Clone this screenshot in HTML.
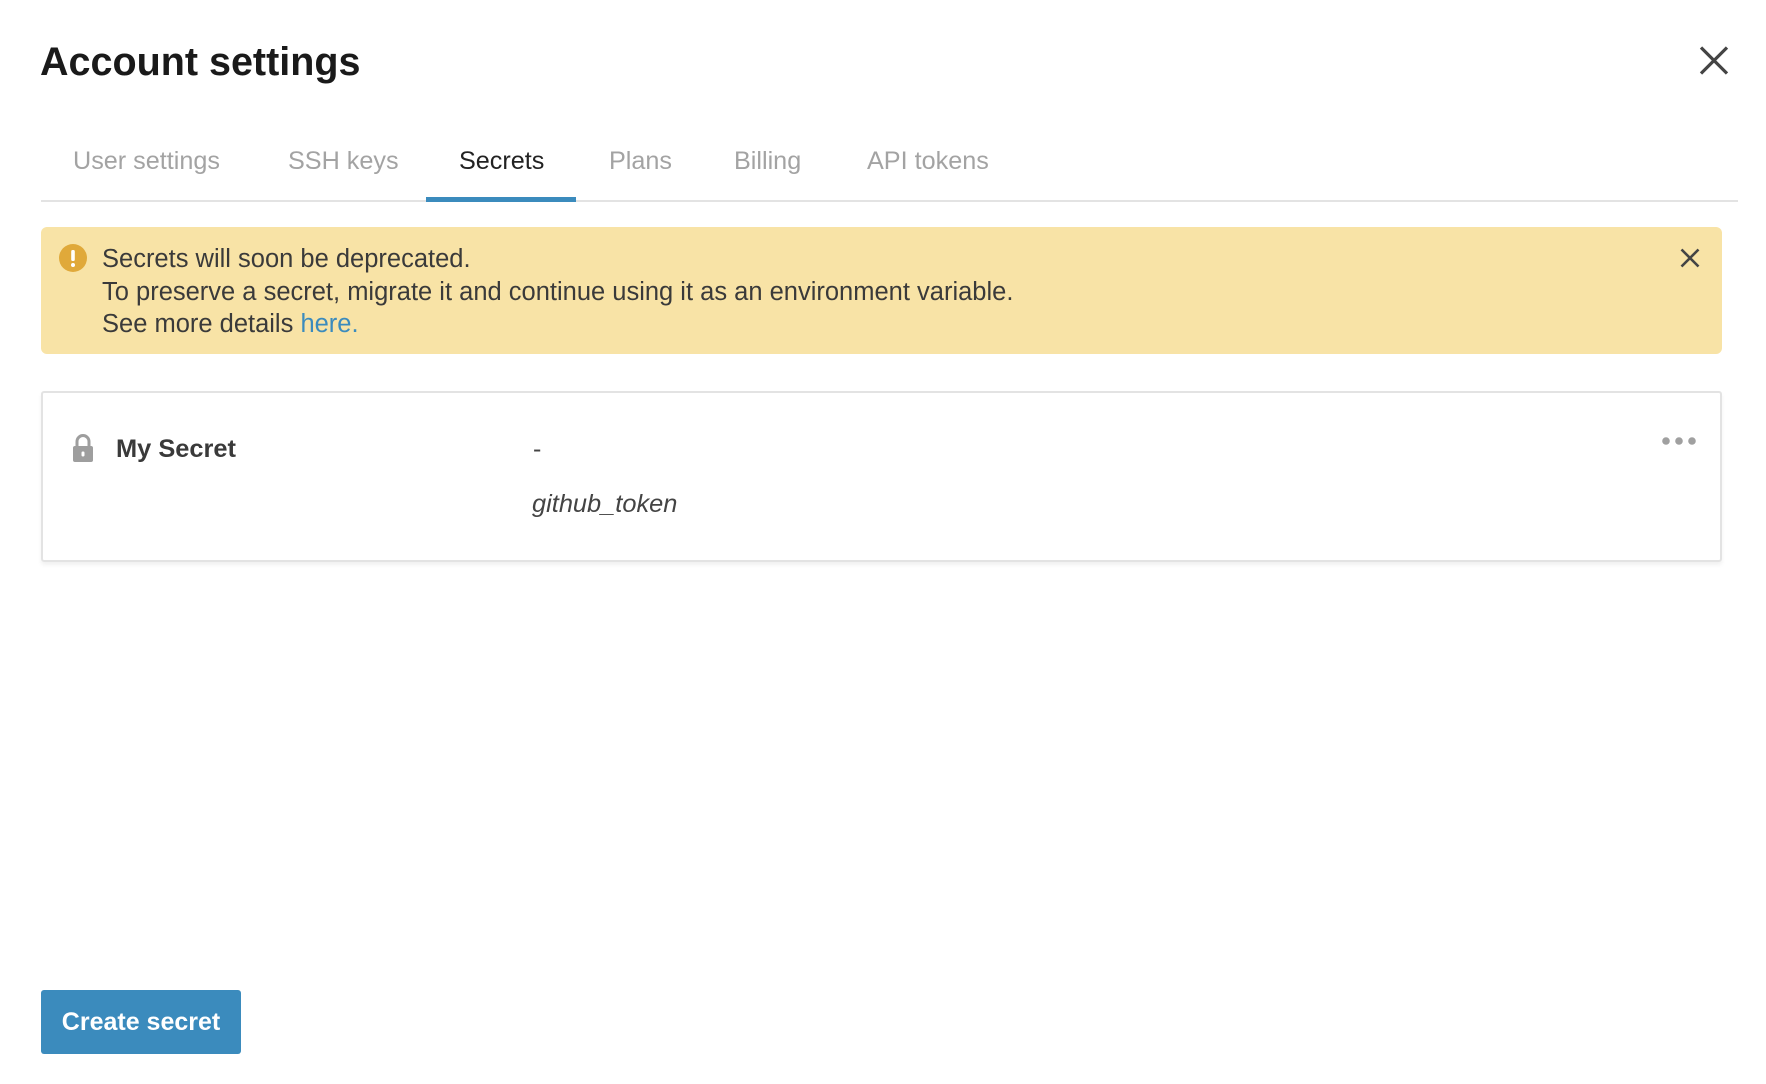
<!DOCTYPE html>
<html><head><meta charset="utf-8"><style>
*{margin:0;padding:0;box-sizing:border-box}
body{width:1766px;height:1084px;background:#fff;font-family:"Liberation Sans",sans-serif;position:relative;overflow:hidden;color:#333}
.a{position:absolute;white-space:nowrap}
.tab{position:absolute;top:147px;font-size:25.2px;color:#a3a3a3;line-height:28px}
</style></head><body>
<div class="a" style="left:40px;top:40px;font-size:39.5px;font-weight:bold;color:#1a1a1a;line-height:44px">Account settings</div>
<svg class="a" style="left:1699px;top:46px" width="30" height="29" viewBox="0 0 30 29"><path d="M2 1.5L28 27.5M28 1.5L2 27.5" stroke="#444" stroke-width="3.2"/></svg>

<div class="tab" style="left:73px">User settings</div>
<div class="tab" style="left:288px">SSH keys</div>
<div class="tab" style="left:459px;color:#222">Secrets</div>
<div class="tab" style="left:609px">Plans</div>
<div class="tab" style="left:734px">Billing</div>
<div class="tab" style="left:867px">API tokens</div>
<div class="a" style="left:41px;top:200px;width:1697px;height:2px;background:#e3e3e3"></div>
<div class="a" style="left:426px;top:197px;width:150px;height:5px;background:#3b8bbd"></div>

<div class="a" style="left:41px;top:227px;width:1681px;height:127px;background:#f8e3a6;border-radius:6px"></div>
<svg class="a" style="left:59px;top:244px" width="28" height="28" viewBox="0 0 28 28"><circle cx="14" cy="14" r="14" fill="#e0a93a"/><rect x="12.2" y="6" width="3.6" height="11" rx="1.5" fill="#fff"/><circle cx="14" cy="21" r="2" fill="#fff"/></svg>
<div class="a" style="left:102px;top:243px;font-size:25.5px;line-height:32.5px;color:#3a3a3a">Secrets will soon be deprecated.<br>To preserve a secret, migrate it and continue using it as an environment variable.<br>See more details <span style="color:#3b8bbd">here.</span></div>
<svg class="a" style="left:1680px;top:248px" width="20" height="20" viewBox="0 0 20 20"><path d="M1.5 1.5L18.5 18.5M18.5 1.5L1.5 18.5" stroke="#444" stroke-width="2.6"/></svg>

<div class="a" style="left:41px;top:391px;width:1681px;height:171px;border:2px solid #e3e3e3;border-radius:3px;box-shadow:0 3px 4px rgba(0,0,0,0.06)"></div>
<svg class="a" style="left:72px;top:433px" width="22" height="30" viewBox="0 0 22 30"><path d="M5 14V8.5a6 6 0 0 1 12 0V14" fill="none" stroke="#9e9e9e" stroke-width="3"/><rect x="1" y="13" width="20" height="16" rx="2" fill="#9e9e9e"/><rect x="9.5" y="18.5" width="3" height="5" rx="1.2" fill="#fff"/></svg>
<div class="a" style="left:116px;top:435px;font-size:25.4px;font-weight:bold;color:#3a3a3a;line-height:28px">My Secret</div>
<div class="a" style="left:533px;top:435px;font-size:25px;color:#444;line-height:28px">-</div>
<div class="a" style="left:532px;top:490px;font-size:25.4px;font-style:italic;color:#444;line-height:28px">github_token</div>
<svg class="a" style="left:1660px;top:435px" width="40" height="12"><circle cx="6" cy="6" r="3.8" fill="#a0a0a0"/><circle cx="19" cy="6" r="3.8" fill="#a0a0a0"/><circle cx="32" cy="6" r="3.8" fill="#a0a0a0"/></svg>

<div class="a" style="left:41px;top:990px;width:200px;height:64px;background:#3b8bbd;border-radius:3px;color:#fff;font-size:25px;font-weight:bold;text-align:center;line-height:64px">Create secret</div>
</body></html>
